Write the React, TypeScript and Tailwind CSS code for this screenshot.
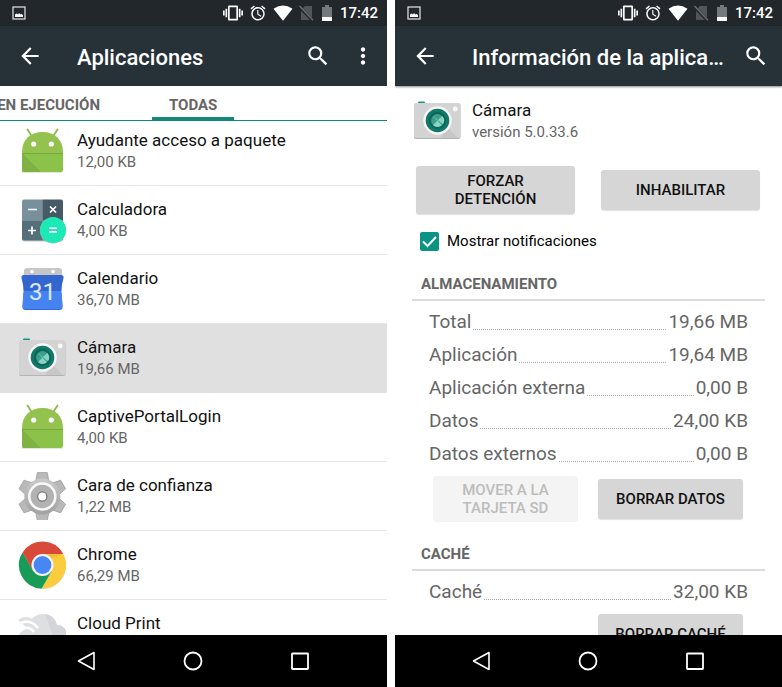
import type { ReactNode } from "react";
import { MdAlarm, MdArrowBack, MdMoreVert, MdSearch, MdVibration } from "react-icons/md";

function AndroidIcon() {
  return (
    <svg viewBox="0 0 48 48" className="size-12" aria-hidden="true">
      <path d="M3.500 44.500h41v1H3.500z" fill="#c5d3ae" />
      <path d="M9.500 2.500l4.500 7M39.500 2.500l-4.500 7" stroke="#8bb84c" strokeWidth="1.800" strokeLinecap="round" />
      <path d="M4 26v-1C4 13 12 5 24.500 5S45 13 45 25v1z" fill="#93c34e" />
      <path d="M4 26h41v17q0 2-2 2H6q-2 0-2-2z" fill="#8bc34a" />
      <path d="M4 26l19 19H6q-2 0-2-2z" fill="#7fb243" />
      <path d="M4 26.500h41" stroke="#78a63f" strokeWidth="1" />
      <circle cx="15.700" cy="17" r="2.600" fill="#fff" />
      <circle cx="33.300" cy="17" r="2.600" fill="#fff" />
    </svg>
  );
}

function CalculatorIcon() {
  return (
    <svg viewBox="0 0 48 48" className="size-12" aria-hidden="true">
      <rect x="4" y="4.500" width="41" height="41" rx="2" fill="#c4c9cc" />
      <path d="M6 3.500h18.500v21H4v-19q0-2 2-2z" fill="#78909c" />
      <path d="M24.500 3.500H43q2 0 2 2v19H24.500z" fill="#455a64" />
      <path d="M4 24.500h20.500v20H6q-2 0-2-2z" fill="#546e7a" />
      <path d="M24.500 24.500H45v18q0 2-2 2H24.500z" fill="#607d8b" />
      <path d="M10 13.500h9M10 34.500h8M14 30.500v8M32 10.500l6 6M38 10.500l-6 6" stroke="#fff" strokeWidth="1.700" />
      <circle cx="35" cy="34.500" r="13" fill="#a9c8bd" />
      <circle cx="35" cy="34" r="13" fill="#1de9b6" />
      <path d="M31 32.300h8M31 35.900h8" stroke="#fff" strokeWidth="1.600" />
    </svg>
  );
}

function CalendarIcon() {
  return (
    <svg viewBox="0 0 48 48" className="size-12" aria-hidden="true">
      <path d="M9 3h32q3 0 3 3v8H6V6q0-3 3-3z" fill="#c6c6c6" />
      <circle cx="14" cy="6.500" r="1.800" fill="#fff" />
      <circle cx="35" cy="6.500" r="1.800" fill="#fff" />
      <path d="M5.500 28h38l1 14q0 3-3 3h-34q-3 0-3-3z" fill="#3367d6" />
      <path d="M5.500 26h38l1 15q0 3-3 3h-34q-3 0-3-3z" fill="#4584f0" />
      <path d="M6 10h37q3 0 2.500 3-2 7-2 13h-38q0-6-2-13-.5-3 2.500-3z" fill="#3466cf" />
      <text x="24.500" y="35" textAnchor="middle" fill="#dfe9fc" className="font-[Roboto] text-[24px] font-normal">
        31
      </text>
    </svg>
  );
}

function CameraIcon() {
  return (
    <svg viewBox="0 0 48 48" className="size-12" aria-hidden="true">
      <rect x="5" y="4.500" width="7" height="4" rx="1" fill="#1b9480" />
      <rect x="1" y="7" width="46.500" height="35" rx="2" fill="#b3b3b3" />
      <rect x="1" y="6" width="46.500" height="35" rx="2" fill="#d3d3d3" />
      <path d="M35 31l10 10H27z" fill="#c7c7c7" />
      <circle cx="42.200" cy="12" r="2.400" fill="#fafafa" />
      <circle cx="24.500" cy="23.500" r="14.200" fill="#f7f7f7" />
      <circle cx="24.500" cy="23.500" r="11.800" fill="#12796a" />
      <circle cx="24.500" cy="23.500" r="8.500" fill="#0a6557" />
      <circle cx="24.500" cy="23.500" r="6.500" fill="#3d9f8b" />
      <path d="M19.800 19L29 28.200a6.500 6.500 0 0 1-9 0L24.500 23.500 29.200 19a6.500 6.500 0 0 1 .8 8.200L19.800 19z" fill="#8ad3c4" />
    </svg>
  );
}

function GearIcon() {
  return (
    <svg viewBox="0 0 48 48" className="size-12" aria-hidden="true">
      <defs>
        <linearGradient id="gear" x1="0" y1="0" x2="0" y2="1">
          <stop offset="0" stopColor="#cacaca" />
          <stop offset="1" stopColor="#a2a2a2" />
        </linearGradient>
      </defs>
      <g fill="#b9b9b9" stroke="#929292" strokeWidth=".6">
        {[0, 60, 120, 180, 240, 300].map((angle) => (
          <path key={angle} d="M17.500 9.500l1.800-9h10l1.800 9z" transform={`rotate(${angle} 24.300 24.500)`} />
        ))}
      </g>
      <circle cx="24.300" cy="24.500" r="18" fill="url(#gear)" />
      <circle cx="24.300" cy="24.500" r="13" fill="#b2b2b2" stroke="#f8f8f8" strokeWidth="2.600" />
      <circle cx="24.300" cy="24.500" r="4.600" fill="#fff" stroke="#777" strokeWidth="1.200" />
    </svg>
  );
}

function ChromeIcon() {
  return (
    <svg viewBox="0 0 48 48" className="size-12" aria-hidden="true">
      <circle cx="24.500" cy="24.800" r="23.200" fill="#d5d0c4" />
      <g transform="translate(24.500 24)">
        <path d="M20.800-11A23.500 23.500 0 0 1-.87 23.500L9.530 5.500 0 0V-11z" fill="#fbcd3e" />
        <path d="M-.87 23.500A23.500 23.500 0 0 1-19.900-12.500L-9.530 5.500 0 0 9.530 5.500z" fill="#179c58" />
        <path d="M-19.900-12.500A23.500 23.500 0 0 1 20.800-11H0V0L-9.530 5.500z" fill="#d9493a" />
        <path d="M0-11h20.800L8-6z" fill="#e8b530" opacity=".6" />
        <circle r="11" fill="#f5f5f5" />
        <circle r="8.900" fill="#4687f3" />
      </g>
    </svg>
  );
}

function CloudPrintIcon() {
  return (
    <svg viewBox="0 0 48 48" className="size-12" aria-hidden="true">
      <path d="M0 10Q6 5 14 8.500 18 4 25 4q11 0 14 11 8 0 10 9v10H2q-3-6 0-11l6-6z" fill="#dedfe1" />
      <path d="M27 4q9 1 12 11 8 0 10 9v10H38z" fill="#d3d5d8" />
      <path d="M0 14.500Q11 7 20 18M2 21q8-7 14 1" fill="none" stroke="#fff" strokeWidth="2.500" />
    </svg>
  );
}

const apps: { name: string; size: string; icon: ReactNode; pressed?: boolean }[] = [
  { name: "Ayudante acceso a paquete", size: "12,00 KB", icon: <AndroidIcon /> },
  { name: "Calculadora", size: "4,00 KB", icon: <CalculatorIcon /> },
  { name: "Calendario", size: "36,70 MB", icon: <CalendarIcon /> },
  { name: "Cámara", size: "19,66 MB", icon: <CameraIcon />, pressed: true },
  { name: "CaptivePortalLogin", size: "4,00 KB", icon: <AndroidIcon /> },
  { name: "Cara de confianza", size: "1,22 MB", icon: <GearIcon /> },
  { name: "Chrome", size: "66,29 MB", icon: <ChromeIcon /> },
  { name: "Cloud Print", size: "", icon: <CloudPrintIcon /> },
];

const storage = [
  ["Total", "19,66 MB"],
  ["Aplicación", "19,64 MB"],
  ["Aplicación externa", "0,00 B"],
  ["Datos", "24,00 KB"],
  ["Datos externos", "0,00 B"],
];

function StatusBar() {
  return (
    <div className="flex h-[26px] shrink-0 items-center bg-[#21272b] pr-[9px] pl-3 text-white">
      <svg viewBox="0 0 14 14" className="mr-auto size-3.5" aria-hidden="true">
        <rect x="1" y="1" width="12" height="12" fill="none" stroke="#d8dadb" strokeWidth="1.300" />
        <path d="M3 11V8.500l1.500-1 1.500 1 1-1.500 1.500 1.500 1-.5L11 9v2z" fill="#fff" />
      </svg>
      <MdVibration className="size-5" aria-hidden="true" />
      <MdAlarm className="ml-1.5 size-[18px]" aria-hidden="true" />
      <svg viewBox="0 0 20 16" className="ml-1.5 h-4 w-5" aria-hidden="true">
        <path d="M.5 3.800Q10-3 19.500 3.800L10 15.800z" fill="#fff" />
      </svg>
      <svg viewBox="0 0 15 16" className="ml-1.5 h-4 w-[15px]" aria-hidden="true">
        <path d="M6 1h7v14H2V5z" fill="#50565a" />
        <path d="M0 1.500L13.500 15.500" stroke="#21272b" strokeWidth="3" />
        <path d="M.5 1L14 15.200" stroke="#6c7174" strokeWidth="1.300" />
      </svg>
      <svg viewBox="0 0 12 16" className="ml-[7px] h-4 w-3" aria-hidden="true">
        <path d="M4 0h4v2h3v10H1V2h3z" fill="#74797c" />
        <path d="M1 12h10v4H1z" fill="#fff" />
      </svg>
      <span className="ml-[7px] text-[15px] leading-5 font-medium">17:42</span>
    </div>
  );
}

function Toolbar({ title, children }: { title: string; children: ReactNode }) {
  return (
    <header className="z-10 flex h-[60px] shrink-0 items-center bg-[#263238] pr-[11px] pl-[17px] text-white shadow-[0_1px_2px_rgba(0,0,0,0.45)]">
      <button type="button" aria-label="Atrás">
        <MdArrowBack className="size-[26px]" />
      </button>
      <h1 className="ml-[34px] min-w-0 flex-1 truncate pt-1 text-[22px] leading-7 font-medium">{title}</h1>
      {children}
    </header>
  );
}

function NavBar() {
  return (
    <nav className="z-10 flex h-[52px] shrink-0 items-center justify-center bg-black pr-0.5 text-white">
      <button type="button" aria-label="Volver" className="flex w-[107px] justify-center">
        <svg viewBox="0 0 20 20" className="size-5" fill="none" stroke="currentColor" strokeWidth="1.600">
          <path d="M18 1.500v17L2.500 10z" strokeLinejoin="round" />
        </svg>
      </button>
      <button type="button" aria-label="Inicio" className="flex w-[107px] justify-center">
        <svg viewBox="0 0 20 20" className="size-5" fill="none" stroke="currentColor" strokeWidth="1.800">
          <circle cx="10" cy="10" r="8.500" />
        </svg>
      </button>
      <button type="button" aria-label="Recientes" className="flex w-[107px] justify-center">
        <svg viewBox="0 0 20 20" className="size-5" fill="none" stroke="currentColor" strokeWidth="1.800">
          <rect x="2" y="2.500" width="16" height="15.500" rx=".5" />
        </svg>
      </button>
    </nav>
  );
}

function Phone({ children }: { children: ReactNode }) {
  return (
    <section className="flex min-w-0 flex-1 flex-col overflow-hidden bg-white">
      <StatusBar />
      {children}
      <NavBar />
    </section>
  );
}

function SearchButton() {
  return (
    <button type="button" aria-label="Buscar" className="mr-0.5">
      <MdSearch className="size-[26px]" />
    </button>
  );
}

const buttonStyle =
  "rounded-[3px] bg-[#d6d6d6] text-[15px] leading-[18px] font-medium text-[#111] shadow-[0_1px_1px_rgba(0,0,0,0.12)]";

function SectionTitle({ children }: { children: ReactNode }) {
  return (
    <h2 className="mx-[17px] border-b-2 border-[#dcdcdc] pt-1 pb-[3px] pl-[9px] text-[15px] leading-6 font-bold text-[#666]">
      {children}
    </h2>
  );
}

function SizeRow({ label, value }: { label: string; value: string }) {
  return (
    <div className="flex h-[33px] items-center">
      <dt>{label}</dt>
      <span className="mx-0.5 h-4 flex-1 border-b border-dotted border-[#aaa]" />
      <dd>{value}</dd>
    </div>
  );
}

function AppList() {
  return (
    <Phone>
      <Toolbar title="Aplicaciones">
        <SearchButton />
        <button type="button" aria-label="Más opciones" className="ml-[17px]">
          <MdMoreVert className="size-[26px]" />
        </button>
      </Toolbar>
      <div
        role="tablist"
        className="z-10 flex h-[35px] shrink-0 overflow-hidden border-b border-[#12897b] bg-white text-[15px] leading-5 font-bold whitespace-nowrap text-[#666]"
      >
        <button
          type="button"
          role="tab"
          aria-selected="false"
          className="flex w-[152px] items-center justify-end border-b-3 border-transparent pt-1.5 pr-[52px]"
        >
          EN EJECUCIÓN
        </button>
        <button type="button" role="tab" aria-selected="true" className="border-b-3 border-[#12897b] px-[17px] pt-1.5">
          TODAS
        </button>
      </div>
      <main className="min-h-0 flex-1 overflow-hidden">
        <ul className="-mt-1">
          {apps.map((app) => (
            <li
              key={app.name}
              className={`flex h-[69px] items-center gap-[11px] border-b pl-[18px] ${
                app.pressed ? "border-[#e0e0e0] bg-[#e0e0e0]" : "border-[#e6e6e6]"
              }`}
            >
              {app.icon}
              <div>
                <p className="text-[17px] leading-[22px] text-[#111]">{app.name}</p>
                <p className="h-[22px] text-[15px] leading-[22px] text-[#666]">{app.size}</p>
              </div>
            </li>
          ))}
        </ul>
      </main>
    </Phone>
  );
}

function AppInfo() {
  return (
    <Phone>
      <Toolbar title="Información de la aplicación">
        <span className="ml-2.5 flex">
          <SearchButton />
        </span>
      </Toolbar>
      <main className="min-h-0 flex-1 overflow-hidden">
        <div className="flex h-20 items-start gap-[11px] pt-[11px] pl-[18px]">
          <CameraIcon />
          <div className="pt-0.5">
            <p className="text-[17px] leading-[22px] text-[#111]">Cámara</p>
            <p className="text-[15px] leading-[22px] text-[#666]">versión 5.0.33.6</p>
          </div>
        </div>
        <div className="grid grid-cols-2 items-center gap-[26px] pr-[22px] pl-[21px]">
          <button type="button" className={`${buttonStyle} h-12 px-6`}>
            FORZAR DETENCIÓN
          </button>
          <button type="button" className={`${buttonStyle} h-10`}>
            INHABILITAR
          </button>
        </div>
        <label className="flex h-[54px] items-center gap-2 pl-[25px] text-[15px] leading-5 text-black">
          <span className="grid size-[19px]">
            <input
              type="checkbox"
              defaultChecked
              className="peer col-start-1 row-start-1 size-[19px] appearance-none rounded-[2px] border-2 border-[#757575] checked:border-[#0b9384] checked:bg-[#0b9384]"
            />
            <svg
              viewBox="0 0 19 19"
              className="pointer-events-none invisible col-start-1 row-start-1 size-[19px] peer-checked:visible"
              fill="none"
              stroke="#fff"
              strokeWidth="2"
              aria-hidden="true"
            >
              <path d="M3 9.500l4.500 4.500L16 5" />
            </svg>
          </span>
          Mostrar notificaciones
        </label>
        <SectionTitle>ALMACENAMIENTO</SectionTitle>
        <dl className="px-[34px] pt-1 text-[19px] leading-6 text-[#666]">
          {storage.map(([label, value]) => (
            <SizeRow key={label} label={label} value={value} />
          ))}
        </dl>
        <div className="mb-4 grid grid-cols-2 items-center gap-5 pt-1.5 pr-[39px] pl-[38px]">
          <button
            type="button"
            disabled
            className="h-[46px] rounded-[3px] bg-[#f4f4f4] px-6 text-[15px] leading-[18px] font-medium text-[#bcbcbc]"
          >
            MOVER A LA TARJETA SD
          </button>
          <button type="button" className={`${buttonStyle} h-10 whitespace-nowrap`}>
            BORRAR DATOS
          </button>
        </div>
        <SectionTitle>CACHÉ</SectionTitle>
        <dl className="px-[34px] pt-1 text-[19px] leading-6 text-[#666]">
          <SizeRow label="Caché" value="32,00 KB" />
        </dl>
        <div className="grid grid-cols-2 gap-5 pt-1.5 pr-[39px] pl-[38px]">
          <button type="button" className={`${buttonStyle} col-start-2 h-10 whitespace-nowrap`}>
            BORRAR CACHÉ
          </button>
        </div>
      </main>
    </Phone>
  );
}

export default function App() {
  return (
    <div className="flex h-screen gap-2 bg-white font-[Roboto,sans-serif]">
      <AppList />
      <AppInfo />
    </div>
  );
}
